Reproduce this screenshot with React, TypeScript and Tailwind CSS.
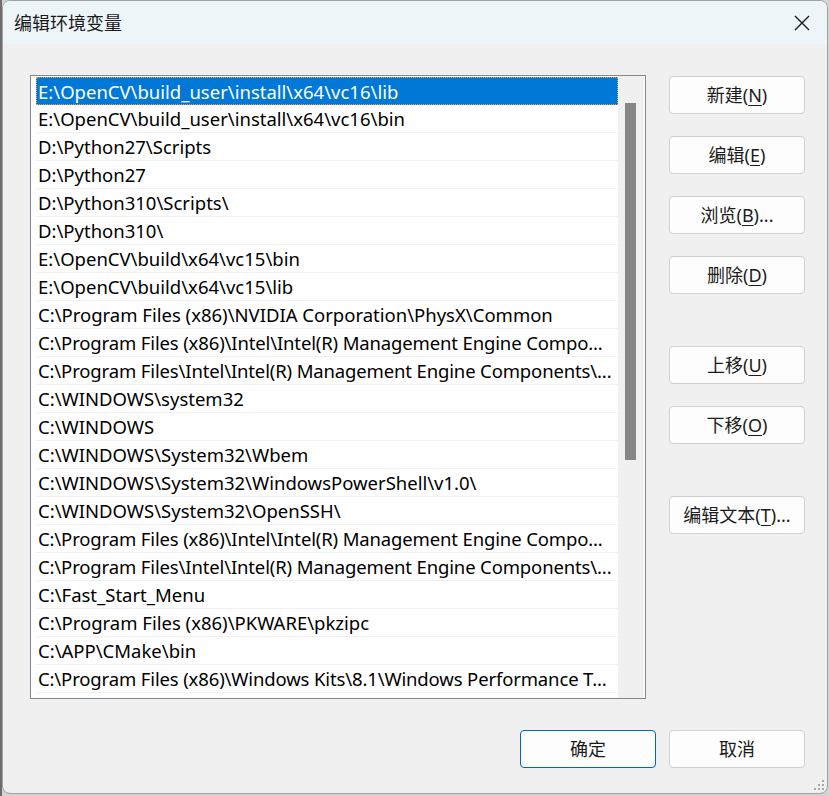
import React from 'react';

const font = { fontFamily: '"Noto Sans", "Noto Sans CJK SC", sans-serif' };

const paths: string[] = [
  'E:\\OpenCV\\build_user\\install\\x64\\vc16\\lib',
  'E:\\OpenCV\\build_user\\install\\x64\\vc16\\bin',
  'D:\\Python27\\Scripts',
  'D:\\Python27',
  'D:\\Python310\\Scripts\\',
  'D:\\Python310\\',
  'E:\\OpenCV\\build\\x64\\vc15\\bin',
  'E:\\OpenCV\\build\\x64\\vc15\\lib',
  'C:\\Program Files (x86)\\NVIDIA Corporation\\PhysX\\Common',
  'C:\\Program Files (x86)\\Intel\\Intel(R) Management Engine Compo...',
  'C:\\Program Files\\Intel\\Intel(R) Management Engine Components\\...',
  'C:\\WINDOWS\\system32',
  'C:\\WINDOWS',
  'C:\\WINDOWS\\System32\\Wbem',
  'C:\\WINDOWS\\System32\\WindowsPowerShell\\v1.0\\',
  'C:\\WINDOWS\\System32\\OpenSSH\\',
  'C:\\Program Files (x86)\\Intel\\Intel(R) Management Engine Compo...',
  'C:\\Program Files\\Intel\\Intel(R) Management Engine Components\\...',
  'C:\\Fast_Start_Menu',
  'C:\\Program Files (x86)\\PKWARE\\pkzipc',
  'C:\\APP\\CMake\\bin',
  'C:\\Program Files (x86)\\Windows Kits\\8.1\\Windows Performance T...',
];

type BtnProps = { label: string; hotkey?: string; tail?: string; primary?: boolean };

function Button({ label, hotkey, tail = '', primary }: BtnProps) {
  return (
    <button
      className={`w-[136px] h-[38px] rounded-[4px] bg-[#fdfdfd] border text-[18px] text-[#1b1b1b] flex items-center justify-center leading-none ${
        primary ? 'border-[#0067c0]' : 'border-[#d0d0d0]'
      }`}
    >
      <span>
        {label}
        {hotkey && <span className="underline underline-offset-[3px]">{hotkey}</span>}
        {tail}
      </span>
    </button>
  );
}

export default function App() {
  return (
    <div className="w-[829px] h-[796px] bg-[#d4d4d4] flex" style={font}>
      {/* 窗口左侧背景 */}
      <div className="w-[2px] h-full bg-[#6d6d6d]" />

      <div className="relative w-[826px] h-[794px] rounded-[8px] border border-[#a3a3a3] bg-[#f0f0f0] overflow-hidden flex flex-col">
        {/* 标题栏 */}
        <div className="h-[43px] shrink-0 bg-[#eef5f9] flex items-center justify-between pl-[11px] pr-[16px]">
          <span className="text-[18px] text-[#1a1a1a] leading-none pt-[1px]">编辑环境变量</span>
          <svg width="16" height="16" viewBox="0 0 16 16" className="mr-[1px]">
            <path d="M1 1L15 15M15 1L1 15" stroke="#1a1a1a" strokeWidth="1.4" />
          </svg>
        </div>

        <div className="flex-1 flex flex-col pt-[31px] pl-[27px] pr-[22px]">
          <div className="flex">
            {/* 路径列表 */}
            <div className="w-[616px] h-[624px] border border-[#828790] bg-white flex">
              <div className="flex-1 pl-[5px] pt-[1px] overflow-hidden">
                {paths.map((p, i) => (
                  <div
                    key={i}
                    className={`h-[28px] w-[582px] flex items-center pt-[2px] whitespace-nowrap overflow-hidden text-[18.5px] leading-none ${
                      p.length > 55 ? 'tracking-[-0.14px]' : ''
                    } ${
                      i === 0
                        ? 'bg-[#0078d7] text-white border border-dotted border-[#f2a24a] pl-[1px]'
                        : 'text-black border-b border-[#f0f0f0] pl-[2px]'
                    }`}
                  >
                    {p}
                  </div>
                ))}
              </div>
              {/* 滚动条 */}
              <div className="w-[26px] mr-[1px] bg-[#f0f0f0] pl-[7px] pt-[27px]">
                <div className="w-[11px] h-[357px] bg-[#868686]" />
              </div>
            </div>

            {/* 右侧按钮 */}
            <div className="ml-[23px] pt-[1px] flex flex-col gap-[22px]">
              <Button label="新建(" hotkey="N" tail=")" />
              <Button label="编辑(" hotkey="E" tail=")" />
              <Button label="浏览(" hotkey="B" tail=")..." />
              <Button label="删除(" hotkey="D" tail=")" />
              <div className="mt-[30px]">
                <Button label="上移(" hotkey="U" tail=")" />
              </div>
              <Button label="下移(" hotkey="O" tail=")" />
              <div className="mt-[30px]">
                <Button label="编辑文本(" hotkey="T" tail=")..." />
              </div>
            </div>
          </div>

          {/* 底部按钮 */}
          <div className="mt-[31px] flex justify-end gap-[13px]">
            <Button label="确定" primary />
            <Button label="取消" />
          </div>
        </div>

        {/* 调整大小手柄 */}
        <svg width="14" height="14" viewBox="0 0 14 14" className="absolute right-[1px] bottom-[1px]">
          <rect x="10" y="2" width="2" height="2" fill="#a8a8a8" />
          <rect x="6" y="6" width="2" height="2" fill="#a8a8a8" />
          <rect x="10" y="6" width="2" height="2" fill="#a8a8a8" />
          <rect x="2" y="10" width="2" height="2" fill="#a8a8a8" />
          <rect x="6" y="10" width="2" height="2" fill="#a8a8a8" />
          <rect x="10" y="10" width="2" height="2" fill="#a8a8a8" />
        </svg>
      </div>
    </div>
  );
}
